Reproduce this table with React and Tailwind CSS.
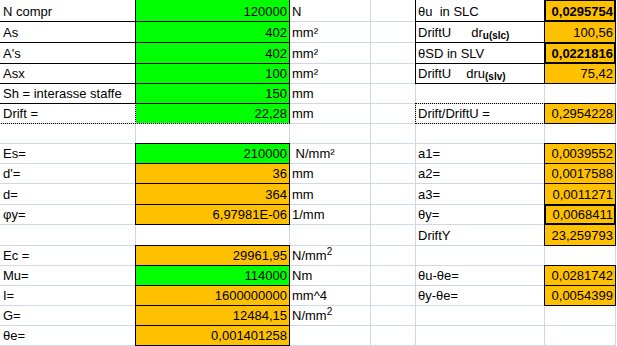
import React from "react";

const G = "bg-[#00ff00]";
const O = "bg-[#ffc000]";

function Cell({ c = {} }) {
  const border =
    c.b === "s"
      ? "outline outline-black"
      : c.b === "t"
      ? "outline-2 outline-black -outline-offset-1"
      : c.b === "d"
      ? "outline outline-dotted outline-black"
      : "";
  return (
    <div
      className={[
        "flex items-end pb-[2px] overflow-visible whitespace-pre leading-[15px]",
        c.bg || "bg-white",
        border,
        c.r ? "justify-end pr-[2px]" : c.first ? "pl-[3px]" : "pl-[2px]",
        c.bold ? "font-bold" : "",
        c.extra || "",
      ].join(" ")}
    >
      {c.t}
    </div>
  );
}

const sub = (base, s, gap) => (
  <span className="flex items-end">
    <span>DriftU</span>
    <span className={gap}>{base}</span>
    <span className="text-[10px] font-bold relative top-[3px]">{s}</span>
  </span>
);

const nmm2 = (
  <span>
    N/mm<sup className="text-[10px]">2</sup>
  </span>
);

const E = {};

const rows = [
  [
    { t: "N compr", b: "s", first: true },
    { t: "120000", bg: G, b: "s", r: true },
    { t: "N" },
    E,
    { t: "θu  in SLC", b: "s" },
    { t: "0,0295754", bg: O, b: "t", r: true, bold: true },
  ],
  [
    { t: "As", b: "s", first: true },
    { t: "402", bg: G, b: "s", r: true },
    { t: "mm²" },
    E,
    { t: sub("dr", "u(slc)", "ml-[20px]"), b: "s" },
    { t: "100,56", bg: O, b: "s", r: true },
  ],
  [
    { t: "A's", b: "s", first: true },
    { t: "402", bg: G, b: "s", r: true },
    { t: "mm²" },
    E,
    { t: "θSD in SLV", b: "s" },
    { t: "0,0221816", bg: O, b: "t", r: true, bold: true },
  ],
  [
    { t: "Asx", b: "s", first: true },
    { t: "100", bg: G, b: "s", r: true },
    { t: "mm²" },
    E,
    { t: sub("dru", "(slv)", "ml-[15px]"), b: "s" },
    { t: "75,42", bg: O, b: "s", r: true },
  ],
  [
    { t: "Sh = interasse staffe", b: "s", first: true },
    { t: "150", bg: G, b: "s", r: true },
    { t: "mm" },
    E,
    E,
    E,
  ],
  [
    { t: "Drift =", b: "d", first: true },
    { t: "22,28", bg: G, b: "d", r: true, extra: "shadow-[1px_0_0_0_#000]" },
    { t: "mm" },
    E,
    { t: "Drift/DriftU =", b: "d" },
    { t: "0,2954228", bg: O, b: "s", r: true },
  ],
  [E, E, E, E, E, E],
  [
    { t: "Es=", first: true },
    { t: "210000", bg: G, b: "s", r: true },
    { t: " N/mm²" },
    E,
    { t: "a1=" },
    { t: "0,0039552", bg: O, b: "s", r: true },
  ],
  [
    { t: "d'=", first: true },
    { t: "36", bg: O, b: "s", r: true },
    { t: "mm" },
    E,
    { t: "a2=" },
    { t: "0,0017588", bg: O, b: "s", r: true },
  ],
  [
    { t: "d=", first: true },
    { t: "364", bg: O, b: "s", r: true },
    { t: "mm" },
    E,
    { t: "a3=" },
    { t: "0,0011271", bg: O, b: "s", r: true },
  ],
  [
    { t: "φy=", first: true },
    { t: "6,97981E-06", bg: O, b: "s", r: true },
    { t: "1/mm" },
    E,
    { t: "θy=" },
    { t: "0,0068411", bg: O, b: "t", r: true },
  ],
  [E, E, E, E, { t: "DriftY" }, { t: "23,259793", bg: O, b: "s", r: true }],
  [
    { t: "Ec =", first: true },
    { t: "29961,95", bg: O, b: "s", r: true },
    { t: nmm2 },
    E,
    E,
    E,
  ],
  [
    { t: "Mu=", first: true },
    { t: "114000", bg: G, b: "s", r: true },
    { t: "Nm" },
    E,
    { t: "θu-θe=" },
    { t: "0,0281742", bg: O, b: "s", r: true },
  ],
  [
    { t: "I=", first: true },
    { t: "1600000000", bg: O, b: "s", r: true },
    { t: "mm^4" },
    E,
    { t: "θy-θe=" },
    { t: "0,0054399", bg: O, b: "s", r: true },
  ],
  [
    { t: "G=", first: true },
    { t: "12484,15", bg: O, b: "s", r: true },
    { t: nmm2 },
    E,
    E,
    E,
  ],
  [
    { t: "θe=", first: true },
    { t: "0,001401258", bg: O, b: "s", r: true },
    E,
    E,
    E,
    E,
  ],
];

export default function App() {
  return (
    <div className="w-[617px] h-[346px] bg-white overflow-hidden font-['Liberation_Sans',Arial,sans-serif] text-[13px] text-black">
      <div className="grid w-fit gap-px bg-[#d0d7e5] pr-px pb-px grid-cols-[135px_153px_80px_44px_128px_70px] grid-rows-[21px_20px_20px_19px_19px_19px_19px_19px_19px_20px_19px_20px_19px_19px_19px_19px_19px]">
        {rows.flatMap((row, i) =>
          row.map((c, j) => <Cell key={i + "-" + j} c={c} />)
        )}
      </div>
    </div>
  );
}
